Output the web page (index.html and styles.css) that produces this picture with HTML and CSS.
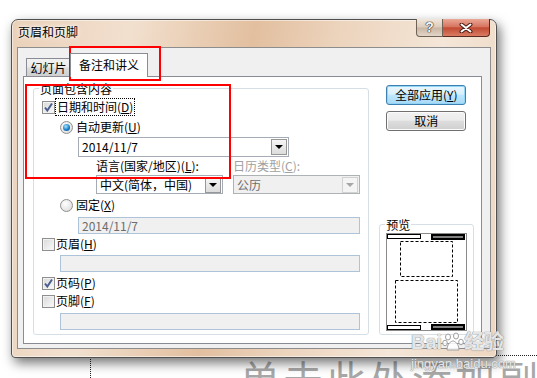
FILE: index.html
```html
<!DOCTYPE html>
<html lang="zh-CN">
<head>
  <meta charset="UTF-8">
  <title>页眉和页脚</title>
  <link rel="stylesheet" href="styles.css">
</head>
<body>
  <div class="slide">
    <div class="placeholder">单击此处添加副标题</div>
  </div>

  <div class="dialog">
    <div class="titlebar">
      <span class="title">页眉和页脚</span>
      <div class="caption">
        <span class="cap-help">?</span>
        <span class="cap-close">
          <svg width="14" height="10" viewBox="0 0 14 10">
            <path d="M2.5 1.5 L11.5 8.5 M11.5 1.5 L2.5 8.5" stroke="#4a1d14" stroke-width="4" stroke-linecap="round"/>
            <path d="M2.5 1.5 L11.5 8.5 M11.5 1.5 L2.5 8.5" stroke="#fff" stroke-width="2" stroke-linecap="round"/>
          </svg>
        </span>
      </div>
    </div>

    <div class="client">
      <div class="tabs">
        <span class="tab">幻灯片</span>
        <span class="tab active">备注和讲义</span>
      </div>

      <div class="page">
        <div class="group main">
          <span class="legend">页面包含内容</span>

          <div class="row lv1">
            <span class="check on">
              <svg width="11" height="11" viewBox="0 0 11 11"><path d="M2 5.5 L4.3 8.5 L9 1.5" fill="none" stroke="#4b5f8e" stroke-width="2"/></svg>
            </span>
            <span class="focus">日期和时间(<u>D</u>)</span>
          </div>
          <div class="row lv2 gap2">
            <span class="radio on"></span>
            <span>自动更新(<u>U</u>)</span>
          </div>
          <div class="combo date">
            <span class="txt">2014/11/7</span>
            <span class="drop"></span>
          </div>
          <div class="lang-labels">
            <span class="lbl-lang">语言(国家/地区)(<u>L</u>):</span>
            <span class="lbl-off">日历类型(<u>C</u>):</span>
          </div>
          <div class="lang-combos">
            <div class="combo lang">
              <span class="txt">中文(简体，中国)</span>
              <span class="drop"></span>
            </div>
            <div class="combo off cal">
              <span class="txt">公历</span>
              <span class="drop"></span>
            </div>
          </div>
          <div class="row lv2 gap2">
            <span class="radio"></span>
            <span>固定(<u>X</u>)</span>
          </div>
          <div class="field fixed">2014/11/7</div>
          <div class="row lv1 gap1">
            <span class="check"></span>
            <span>页眉(<u>H</u>)</span>
          </div>
          <div class="field wide gap2"></div>
          <div class="row lv1 gap2">
            <span class="check on">
              <svg width="11" height="11" viewBox="0 0 11 11"><path d="M2 5.5 L4.3 8.5 L9 1.5" fill="none" stroke="#4b5f8e" stroke-width="2"/></svg>
            </span>
            <span>页码(<u>P</u>)</span>
          </div>
          <div class="row lv1">
            <span class="check"></span>
            <span>页脚(<u>F</u>)</span>
          </div>
          <div class="field wide gap3"></div>
        </div>

        <div class="side">
          <button class="btn default">全部应用(<u>Y</u>)</button>
          <button class="btn">取消</button>

          <div class="group preview">
            <span class="legend">预览</span>
            <svg width="81" height="98" viewBox="0 0 81 98">
              <rect x="0.5" y="0.5" width="80" height="97" fill="#fff" stroke="#8a8a8a"/>
              <rect x="1.5" y="1.5" width="33" height="4" fill="#fff" stroke="#000"/>
              <rect x="45" y="1" width="34" height="6" fill="#000"/>
              <rect x="47" y="3.5" width="30" height="1" fill="#fff"/>
              <rect x="14.5" y="8.5" width="52" height="35" fill="none" stroke="#000" stroke-dasharray="3 2"/>
              <rect x="9.5" y="47.5" width="62" height="42" fill="none" stroke="#000" stroke-dasharray="3 2"/>
              <rect x="1.5" y="92.5" width="33" height="4" fill="#fff" stroke="#000"/>
              <rect x="45" y="91" width="34" height="6" fill="#000"/>
              <rect x="47" y="93.5" width="30" height="1" fill="#fff"/>
            </svg>
          </div>
        </div>
      </div>
    </div>
  </div>

  <div class="mark mark-tab"></div>
  <div class="mark mark-date"></div>

  <div class="watermark">
    <div class="wm-logo">Bai<svg width="22" height="20" viewBox="0 0 22 20">
        <g fill="rgba(255,255,255,0.85)" stroke="#a0a0a0" stroke-width="1">
          <ellipse cx="6" cy="5" rx="2.5" ry="3"/>
          <ellipse cx="14" cy="4" rx="2.5" ry="3"/>
          <ellipse cx="3" cy="11" rx="2.3" ry="2.8"/>
          <ellipse cx="19" cy="10" rx="2.3" ry="2.8"/>
          <path d="M5 18 C5 12 9 9 11 9 C13 9 17 12 17 18 Z"/>
        </g>
      </svg>经验</div>
    <div class="wm-url">jingyan.baidu.com</div>
  </div>
</body>
</html>
```

FILE: styles.css
```css
* {
  box-sizing: border-box;
}

body {
  margin: 0;
  width: 537px;
  height: 378px;
  overflow: hidden;
  position: relative;
  background: #fff;
  font-family: "Noto Sans CJK SC", sans-serif;
  font-size: 12px;
  color: #000;
}

/* slide behind the dialog */
.slide {
  padding: 355px 0 0 90px;
}

.placeholder {
  width: 447px;
  height: 23px;
  overflow: hidden;
  border-top: 1px dotted #222;
  border-left: 1px dotted #222;
  padding-left: 149px;
  font-size: 40px;
  line-height: 44px;
  letter-spacing: 3px;
  color: #a8a8a8;
  white-space: nowrap;
}

/* window */
.dialog {
  position: absolute;
  left: 11px;
  top: 19px;
  width: 486px;
  height: 339px;
  border: 1px solid #505050;
  border-radius: 7px 7px 4px 4px;
  background: linear-gradient(100deg, #ead0b8 0%, #f2e0cf 22%, #e2bf9f 45%, #ecd3bc 60%, #f4e6d8 80%, #edd6c1 100%);
  box-shadow: inset 0 0 0 1px rgba(255,255,255,0.5), 3px 5px 12px rgba(0,0,0,0.55);
  display: flex;
  flex-direction: column;
}

.titlebar {
  height: 27px;
  display: flex;
  padding: 0 6px;
}

.title {
  padding-top: 5px;
  line-height: 14px;
  text-shadow: 0 0 6px #fff, 0 0 3px #fff;
}

.caption {
  margin-left: auto;
  margin-top: -1px;
  display: flex;
  height: 18px;
}

.cap-help {
  width: 27px;
  border: 1px solid #6e6257;
  border-top: none;
  border-radius: 0 0 0 4px;
  background: linear-gradient(#f1e7dd, #dccbbb 48%, #c9b5a2 52%, #e3d5c7);
  text-align: center;
  font-family: "Liberation Sans", sans-serif;
  font-weight: bold;
  font-size: 14px;
  line-height: 17px;
  color: #f6f6f6;
  text-shadow: 0 0 1px #222, 0 0 1px #222, 0 0 1px #222;
}

.cap-close {
  width: 47px;
  border: 1px solid #5a2a20;
  border-top: none;
  border-left: none;
  border-radius: 0 0 4px 0;
  background: linear-gradient(#eaa896, #d77560 45%, #c24a33 52%, #d97c63);
  display: flex;
  align-items: center;
  justify-content: center;
}

.client {
  margin: 0 5px 8px;
  height: 302px;
  border: 1px solid #8d8d8d;
  background: #f0f0f0;
  display: flex;
  flex-direction: column;
}

/* tabs */
.tabs {
  height: 28px;
  display: flex;
  align-items: flex-end;
  padding-left: 8px;
}

.tab {
  width: 45px;
  height: 18px;
  padding-top: 1px;
  border: 1px solid #898c95;
  border-bottom: none;
  background: linear-gradient(#f2f2f2, #ebebeb 48%, #dddddd 52%, #cfcfcf);
  text-align: center;
  line-height: 16px;
}

.tab.active {
  width: 78px;
  height: 24px;
  padding-top: 3px;
  margin-left: -1px;
  margin-bottom: -1px;
  background: #fff;
  position: relative;
  z-index: 1;
}

.page {
  flex: 1;
  margin: 0 8px 4px 5px;
  border: 1px solid #898c95;
  background: #fff;
  display: flex;
  padding: 0 7px 8px 9px;
}

/* group boxes */
.group {
  position: relative;
  border: 1px solid #d5dfe5;
  border-radius: 3px;
}

.legend {
  position: absolute;
  top: -8px;
  left: 5px;
  padding: 0 1px;
  background: #fff;
  line-height: 16px;
}

.main {
  width: 337px;
  height: 247px;
  margin-top: 11px;
  padding-top: 9px;
}

.row {
  height: 18px;
  display: flex;
  align-items: center;
  line-height: 16px;
}

.row.lv1 {
  padding-left: 8px;
}

.row.lv2 {
  padding-left: 26px;
}

.gap1 { margin-top: 1px; }
.gap2 { margin-top: 2px; }
.gap3 { margin-top: 3px; }

.check {
  flex: none;
  width: 13px;
  height: 13px;
  margin-right: 1px;
  border: 1px solid #8f8f8f;
  background: linear-gradient(135deg, #d8d8d8, #fbfbfb);
  box-shadow: inset 0 0 0 1px #f2f2f2;
}

.check svg {
  display: block;
}

.focus {
  outline: 1px dotted #000;
  padding: 0 1px;
}

.radio {
  flex: none;
  width: 13px;
  height: 13px;
  margin-right: 3px;
  border-radius: 50%;
  border: 1px solid #8f8f8f;
  background: radial-gradient(circle at 40% 35%, #fff, #d6d6d6);
}

.radio.on::after {
  content: "";
  display: block;
  width: 7px;
  height: 7px;
  margin: 2px;
  border-radius: 50%;
  background: radial-gradient(circle at 40% 35%, #a8e6ff, #1c80c6 55%, #0b3f7e);
}

/* combo boxes and fields */
.combo {
  display: flex;
  align-items: center;
  height: 20px;
  padding-left: 3px;
  border: 1px solid #a5acb5;
  background: #fff;
  line-height: 16px;
}

.combo .txt {
  flex: 1;
  white-space: nowrap;
}

.drop {
  flex: none;
  width: 16px;
  height: 16px;
  margin-right: 1px;
  border: 1px solid #979797;
  background: linear-gradient(#f6f6f6, #dcdcdc);
  display: flex;
  align-items: center;
  justify-content: center;
}

.drop::before {
  content: "";
  border-left: 4px solid transparent;
  border-right: 4px solid transparent;
  border-top: 4px solid #000;
}

.combo.date {
  width: 211px;
  margin: 1px 0 0 44px;
}

.lang-labels {
  display: flex;
  height: 16px;
  margin-top: 1px;
  padding-left: 62px;
  line-height: 16px;
}

.lbl-lang {
  width: 137px;
}

.lbl-off {
  color: #a0a0a0;
}

.lang-combos {
  display: flex;
  height: 19px;
  margin-top: 1px;
  padding-left: 62px;
}

.combo.lang,
.combo.cal {
  width: 127px;
  height: 19px;
}

.combo.cal {
  margin-left: 10px;
}

.combo.off {
  background: #f0f0f0;
  border-color: #adb2b5;
  color: #6d6d6d;
}

.combo.off .drop {
  border-color: #d2d2d2;
  background: #f4f4f4;
}

.combo.off .drop::before {
  border-top-color: #a6a6a6;
}

.field {
  height: 17px;
  padding-left: 3px;
  border: 1px solid #adc3da;
  background: #f0f0f0;
  color: #6d6d6d;
  line-height: 15px;
}

.field.fixed {
  width: 282px;
  margin: 3px 0 0 44px;
}

.field.wide {
  width: 300px;
  margin-left: 26px;
}

/* right column */
.side {
  width: 95px;
  margin-left: 10px;
  display: flex;
  flex-direction: column;
}

.btn {
  width: 80px;
  height: 20px;
  margin-left: 7px;
  padding: 0;
  border: 1px solid #707070;
  border-radius: 3px;
  background: linear-gradient(#f2f2f2, #ebebeb 45%, #dddddd 52%, #cfcfcf);
  box-shadow: inset 0 0 0 1px #fbfbfb;
  font: inherit;
  line-height: 16px;
  color: #000;
}

.btn.default {
  margin-top: 8px;
  border-color: #3c7fb1;
  background: linear-gradient(#eaf6fd, #d9f0fc 45%, #bee6fd 52%, #a7d9f5);
  box-shadow: inset 0 0 0 1px #93d5f5;
}

.btn + .btn {
  margin-top: 6px;
}

.preview {
  margin-top: auto;
  height: 111px;
}

.preview svg {
  display: block;
  margin: 8px 0 0 6px;
}

/* red annotation boxes */
.mark {
  position: absolute;
  border: 2px solid #ff0000;
}

.mark-tab {
  left: 69px;
  top: 46px;
  width: 92px;
  height: 35px;
}

.mark-date {
  left: 25px;
  top: 84px;
  width: 206px;
  height: 95px;
}

/* watermark */
.watermark {
  position: absolute;
  left: 411px;
  top: 331px;
  color: rgba(255,255,255,0.8);
  text-shadow: 0 0 1px #8a8a8a, 0 0 1px #8a8a8a;
  font-family: "Liberation Sans", "Noto Sans CJK SC", sans-serif;
}

.wm-logo {
  display: flex;
  align-items: center;
  font-size: 20px;
  font-weight: bold;
  line-height: 22px;
}

.wm-url {
  font-size: 13px;
  line-height: 16px;
  margin-top: 3px;
}
```
